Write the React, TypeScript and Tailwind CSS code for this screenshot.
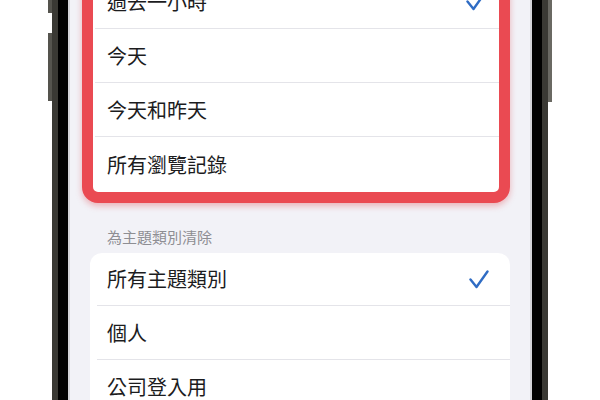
import React from 'react'

const font = { fontFamily: '"Noto Sans CJK TC", "Noto Sans CJK SC", "Noto Sans", sans-serif' }

function Check() {
  return (
    <svg width="20" height="19" viewBox="0 0 20 19" fill="none" className="shrink-0">
      <path d="M1.5 9.5 L7.5 17 L18.5 1.5" stroke="#2f6cc4" strokeWidth="2.4" strokeLinecap="round" strokeLinejoin="round" />
    </svg>
  )
}

interface RowProps {
  label: string
  checked?: boolean
  height: string
  pad: string
}

function Row({ label, checked, height, pad }: RowProps) {
  return (
    <div className={`flex items-center justify-between ${height} ${pad}`}>
      <span className="text-[20px] leading-none text-[#1c1c1e]">{label}</span>
      {checked && <Check />}
    </div>
  )
}

function Sep({ inset }: { inset: string }) {
  return <div className={`h-px bg-[#e4e4e9] ${inset}`} />
}

export default function App() {
  return (
    <div className="flex h-[400px] w-[600px] justify-center overflow-hidden bg-white" style={font}>
      <div className="relative h-full w-[504px]">
        {/* side buttons */}
        <div className="absolute left-0 top-0 h-[13px] w-[4px] bg-[#55544e]" />
        <div className="absolute left-0 top-[33px] h-[68px] w-[4px] bg-[#55544e]" />
        <div className="absolute right-0 top-0 h-[102px] w-[4px] bg-[#6a6963]" />

        <div className="mx-[4px] h-full border-x-[6px] border-[#3a3934] bg-black px-[10px]">
          <div className="flex h-full flex-col overflow-hidden border-x-2 border-[#d2d2d7] bg-[#f2f2f7]">
            <div className="-mt-[36px] ml-[12px] mr-[20px] shrink-0 rounded-[16px] border-[11px] border-[#ea4a52] bg-white shadow-[0_3px_6px_rgba(220,60,70,0.35)]">
              <Row label="過去一小時" checked height="h-[53px]" pad="pl-[14px] pr-[13px]" />
              <Sep inset="ml-[2px]" />
              <Row label="今天" height="h-[53px]" pad="pl-[14px] pr-[13px]" />
              <Sep inset="ml-[2px]" />
              <Row label="今天和昨天" height="h-[53px]" pad="pl-[14px] pr-[13px]" />
              <Sep inset="ml-[2px]" />
              <Row label="所有瀏覽記錄" height="h-[55px]" pad="pl-[14px] pr-[13px]" />
            </div>

            <div className="mt-[24px] mb-[6px] shrink-0 pl-[37px] text-[15px] leading-[20px] text-[#8e8e93]">
              為主題類別清除
            </div>

            <div className="mx-[20px] shrink-0 rounded-[12px] bg-white">
              <Row label="所有主題類別" checked height="h-[52px]" pad="pl-[17px] pr-[21px]" />
              <Sep inset="ml-[7px]" />
              <Row label="個人" height="h-[53px]" pad="pl-[17px] pr-[21px]" />
              <Sep inset="ml-[7px]" />
              <Row label="公司登入用" height="h-[53px]" pad="pl-[17px] pr-[21px]" />
            </div>
          </div>
        </div>
      </div>
    </div>
  )
}
